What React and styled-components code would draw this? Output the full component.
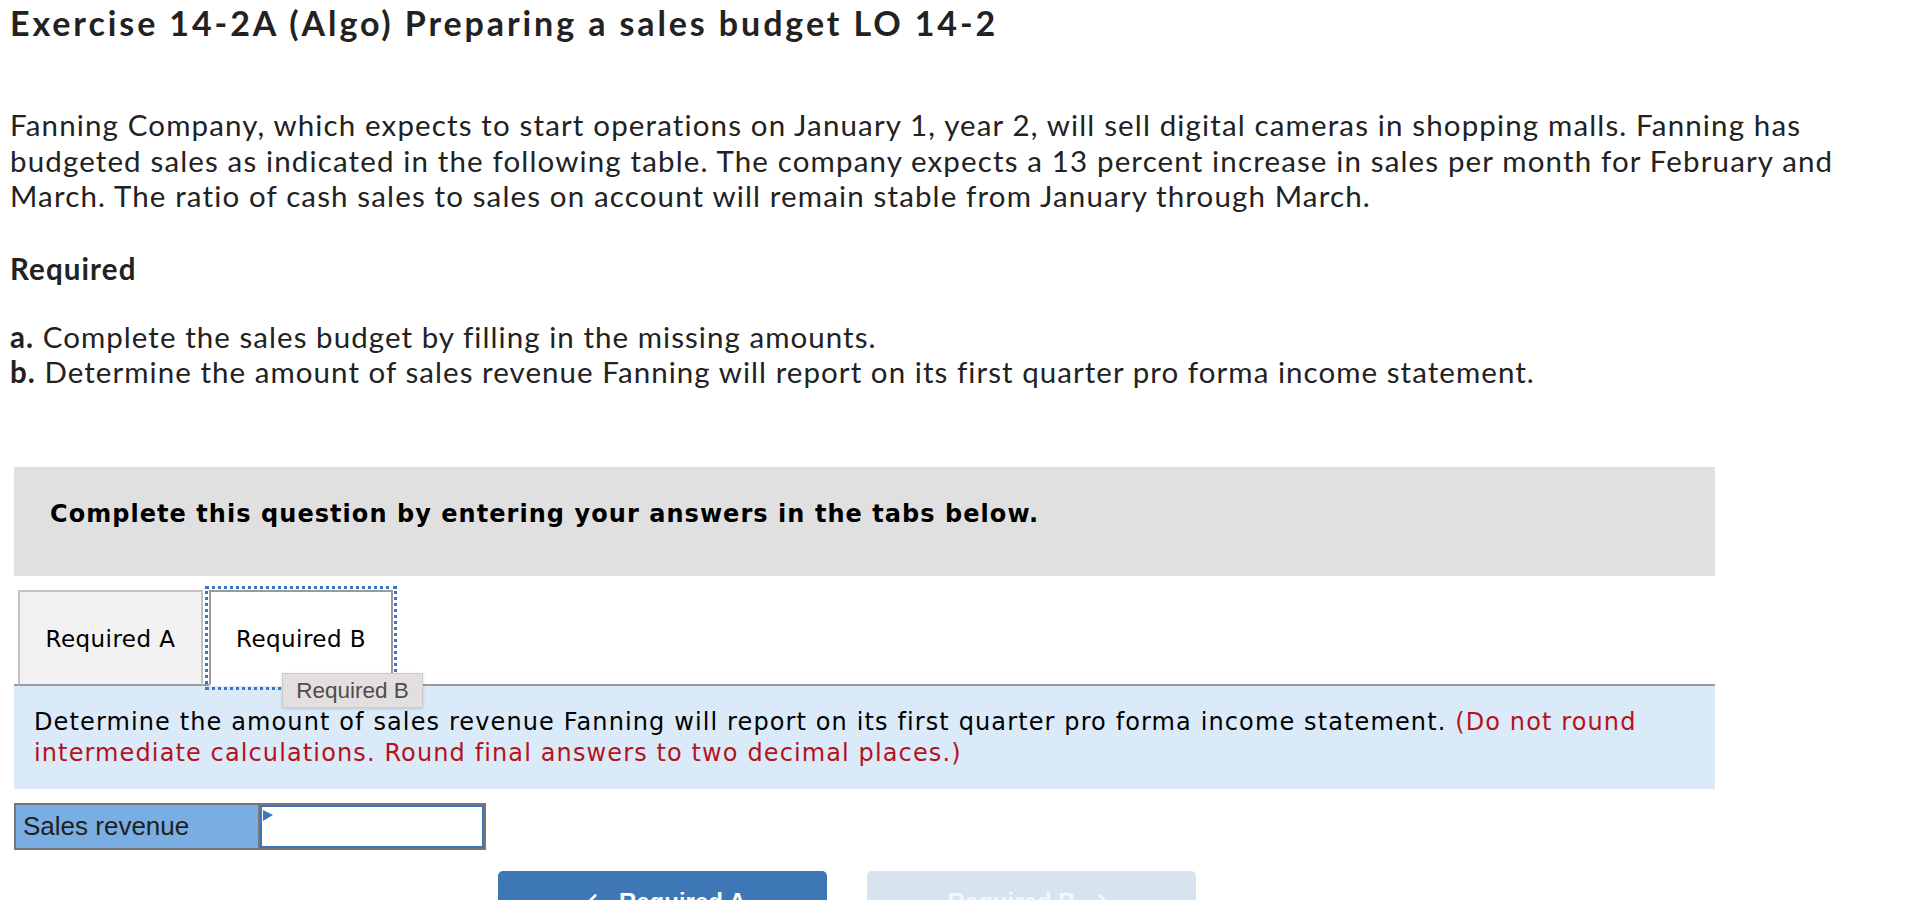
import React from 'react';
import styled, { createGlobalStyle } from 'styled-components';
import { ChevronLeft, ChevronRight } from 'lucide-react';

const GlobalStyle = createGlobalStyle`
  body {
    margin: 0;
    background: #fff;
  }
`;

const Page = styled.div`
  padding: 3px 0 0 10px;
  font-family: Lato, "Open Sans", sans-serif;
  color: #222;
`;

const Title = styled.h1`
  margin: 0;
  font-size: 34px;
  line-height: 40px;
  font-weight: 700;
  letter-spacing: 2.9px;
`;

const Intro = styled.p`
  margin: 64px 0 0;
  font-size: 29.5px;
  line-height: 35.5px;
  letter-spacing: 1.14px;
  white-space: nowrap;
`;

const SectionHead = styled.h2`
  margin: 37px 0 0;
  font-size: 29.5px;
  line-height: 35.5px;
  font-weight: 700;
  letter-spacing: 1.1px;
`;

const Steps = styled.div`
  margin-top: 33px;
  font-size: 29.5px;
  line-height: 35px;
  letter-spacing: 1.05px;
`;

const Step = styled.div`
  b {
    font-weight: 700;
  }
`;

const QuestionArea = styled.div`
  margin: 78px 0 0 4px;
  width: 1701px;
  font-family: "DejaVu Sans", Verdana, sans-serif;
  color: #000;
`;

const Banner = styled.div`
  box-sizing: border-box;
  height: 109px;
  padding: 32px 36px 0;
  background: #e0e0e0;
  font-size: 24px;
  line-height: 30px;
  font-weight: 700;
  letter-spacing: 1.05px;
`;

const TabBar = styled.div`
  position: relative;
  display: flex;
  gap: 6px;
  padding: 14px 0 0 4px;
  border-bottom: 2px solid #999;
`;

const Tab = styled.button`
  box-sizing: border-box;
  width: ${p => (p.active ? '184px' : '185px')};
  height: 96px;
  margin-bottom: -2px;
  padding: 2px 0 0;
  border: 2px solid ${p => (p.active ? '#9a9a9a' : '#c2c2c2')};
  border-bottom: ${p => (p.active ? '2px solid #fff' : '2px solid #999')};
  background: ${p => (p.active ? '#fff' : '#f2f2f2')};
  font-family: "DejaVu Sans", Verdana, sans-serif;
  font-size: 23px;
  letter-spacing: 0.45px;
  color: #000;
  cursor: pointer;
  outline: ${p => (p.active ? '3px dotted #3a74c4' : 'none')};
  outline-offset: 1px;
`;

const Tooltip = styled.div`
  position: absolute;
  left: 268px;
  top: 97px;
  z-index: 2;
  box-sizing: border-box;
  width: 141px;
  height: 35px;
  display: flex;
  align-items: center;
  justify-content: center;
  background: #e3dfdf;
  border: 1px solid #cfcaca;
  box-shadow: 0 1px 3px rgba(0, 0, 0, 0.15);
  font-family: "Liberation Sans", Arial, sans-serif;
  font-size: 22.5px;
  color: #4d4d4d;
`;

const Prompt = styled.div`
  box-sizing: border-box;
  height: 103px;
  padding: 21px 30px 0 20px;
  background: #dbeaf8;
  font-size: 24px;
  line-height: 31px;
  letter-spacing: 1.12px;
`;

const Hint = styled.span`
  color: #b5121b;
`;

const AnswerRow = styled.div`
  display: inline-grid;
  grid-template-columns: 244px 224px;
  margin-top: 14px;
  border: 2px solid #777;
  height: 43px;
`;

const LabelCell = styled.div`
  display: flex;
  align-items: center;
  padding-left: 7px;
  background: #7aade1;
  border-right: 2px solid #777;
  font-family: "Liberation Sans", Arial, sans-serif;
  font-size: 26px;
  color: #1f1f1f;
`;

const InputCell = styled.div`
  position: relative;
`;

const AmountInput = styled.input`
  box-sizing: border-box;
  width: 100%;
  height: 100%;
  margin: 0;
  border: 2px solid #3d75b6;
  background: #fff;
  outline: none;
`;

const Flag = styled.span`
  position: absolute;
  left: 3px;
  top: 5px;
  width: 0;
  height: 0;
  border-top: 5px solid transparent;
  border-bottom: 6px solid transparent;
  border-left: 10px solid #3d75b6;
`;

const NavRow = styled.div`
  display: flex;
  gap: 40px;
  margin: 21px 0 0 484px;
`;

const NavButton = styled.button`
  box-sizing: border-box;
  width: 329px;
  height: 62px;
  display: flex;
  align-items: center;
  justify-content: center;
  gap: 14px;
  border: none;
  border-radius: 5px;
  background: ${p => (p.disabled ? '#d8e3f0' : '#3d77b6')};
  color: ${p => (p.disabled ? '#f4f7fb' : '#fff')};
  font-family: "Liberation Sans", Arial, sans-serif;
  font-size: 24px;
  font-weight: 700;
  cursor: ${p => (p.disabled ? 'default' : 'pointer')};
`;

export default function App() {
  return (
    <>
      <GlobalStyle />
      <Page>
        <Title>Exercise 14-2A (Algo) Preparing a sales budget LO 14-2</Title>
        <Intro>
          Fanning Company, which expects to start operations on January 1, year 2, will sell digital cameras in shopping malls. Fanning has
          <br />
          budgeted sales as indicated in the following table. The company expects a 13 percent increase in sales per month for February and
          <br />
          March. The ratio of cash sales to sales on account will remain stable from January through March.
        </Intro>
        <SectionHead>Required</SectionHead>
        <Steps>
          <Step>
            <b>a.</b> Complete the sales budget by filling in the missing amounts.
          </Step>
          <Step>
            <b>b.</b> Determine the amount of sales revenue Fanning will report on its first quarter pro forma income statement.
          </Step>
        </Steps>

        <QuestionArea>
          <Banner>Complete this question by entering your answers in the tabs below.</Banner>
          <TabBar>
            <Tab>Required A</Tab>
            <Tab active>Required B</Tab>
            <Tooltip>Required B</Tooltip>
          </TabBar>
          <Prompt>
            Determine the amount of sales revenue Fanning will report on its first quarter pro forma income statement.{' '}
            <Hint>(Do not round intermediate calculations. Round final answers to two decimal places.)</Hint>
          </Prompt>
          <AnswerRow>
            <LabelCell>Sales revenue</LabelCell>
            <InputCell>
              <AmountInput type="text" />
              <Flag />
            </InputCell>
          </AnswerRow>
          <NavRow>
            <NavButton>
              <ChevronLeft size={26} strokeWidth={2.5} />
              Required A
            </NavButton>
            <NavButton disabled>
              Required B
              <ChevronRight size={26} strokeWidth={2.5} />
            </NavButton>
          </NavRow>
        </QuestionArea>
      </Page>
    </>
  );
}
